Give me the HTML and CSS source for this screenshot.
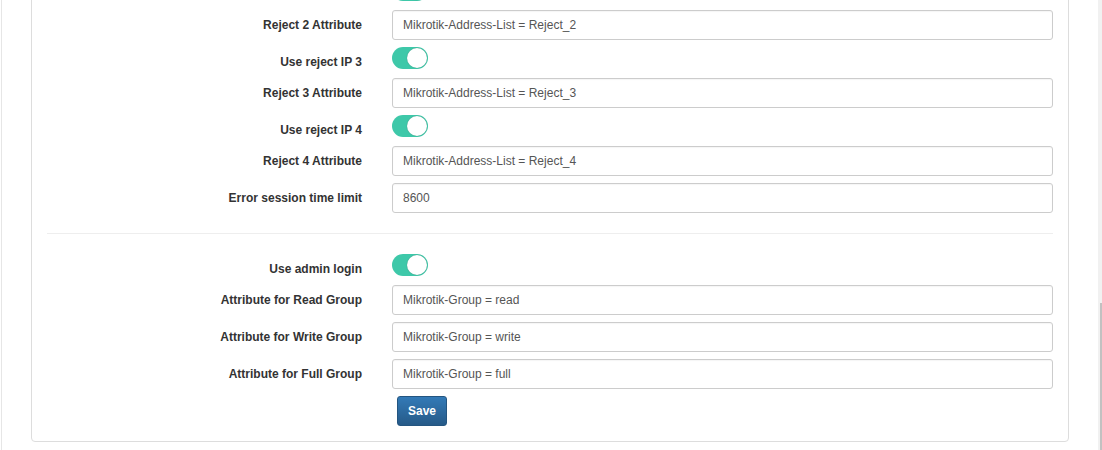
FILE: index.html
```html
<!DOCTYPE html>
<html>
<head>
<meta charset="utf-8">
<link rel="stylesheet" href="styles.css">
</head>
<body>
<div class="page">
  <div class="content">
    <div class="card">
      <form class="form">
        <div class="group toggle-row">
          <span class="label"></span>
          <div class="control"><span class="switch on"><span class="knob"></span></span></div>
        </div>
        <div class="group">
          <label class="label">Reject 2 Attribute</label>
          <div class="control"><input class="input" type="text" value="Mikrotik-Address-List = Reject_2"></div>
        </div>
        <div class="group toggle-row">
          <label class="label">Use reject IP 3</label>
          <div class="control"><span class="switch on"><span class="knob"></span></span></div>
        </div>
        <div class="group">
          <label class="label">Reject 3 Attribute</label>
          <div class="control"><input class="input" type="text" value="Mikrotik-Address-List = Reject_3"></div>
        </div>
        <div class="group toggle-row">
          <label class="label">Use reject IP 4</label>
          <div class="control"><span class="switch on"><span class="knob"></span></span></div>
        </div>
        <div class="group">
          <label class="label">Reject 4 Attribute</label>
          <div class="control"><input class="input" type="text" value="Mikrotik-Address-List = Reject_4"></div>
        </div>
        <div class="group">
          <label class="label">Error session time limit</label>
          <div class="control"><input class="input" type="text" value="8600"></div>
        </div>
        <hr class="divider">
        <div class="group toggle-row">
          <label class="label">Use admin login</label>
          <div class="control"><span class="switch on"><span class="knob"></span></span></div>
        </div>
        <div class="group">
          <label class="label">Attribute for Read Group</label>
          <div class="control"><input class="input" type="text" value="Mikrotik-Group = read"></div>
        </div>
        <div class="group">
          <label class="label">Attribute for Write Group</label>
          <div class="control"><input class="input" type="text" value="Mikrotik-Group = write"></div>
        </div>
        <div class="group">
          <label class="label">Attribute for Full Group</label>
          <div class="control"><input class="input" type="text" value="Mikrotik-Group = full"></div>
        </div>
        <div class="group actions">
          <span class="label"></span>
          <div class="control"><button class="btn" type="button">Save</button></div>
        </div>
      </form>
    </div>
  </div>
  <div class="scrollbar"><div class="thumb"></div></div>
</div>
</body>
</html>
```

FILE: styles.css
```css
html, body {
  margin: 0;
  padding: 0;
  background: #ffffff;
  height: 100%;
  overflow: hidden;
}

body {
  font-family: "Liberation Sans", Arial, sans-serif;
  font-size: 12px;
  color: #333333;
}

.page {
  display: flex;
  height: 450px;
}

.content {
  flex: 1;
  margin-left: 1px;
  border-left: 1px solid #e6e6e6;
  padding: 0 29px;
}

.card {
  margin-top: -22px;
  border: 1px solid #dddddd;
  border-radius: 4px;
  padding: 0 15px 15px;
  background: #ffffff;
}

.form {
  margin: 0;
}

.group {
  display: grid;
  grid-template-columns: 315px 1fr;
  column-gap: 30px;
  margin-bottom: 7px;
}

.label {
  text-align: right;
  font-weight: bold;
  font-size: 12px;
  line-height: 17px;
  padding-top: 7px;
  color: #333333;
}

.toggle-row .control {
  height: 24px;
}

.input {
  display: block;
  box-sizing: border-box;
  width: 100%;
  height: 30px;
  padding: 0 10px;
  border: 1px solid #cccccc;
  border-radius: 3px;
  font-family: "Liberation Sans", Arial, sans-serif;
  font-size: 12px;
  color: #555555;
  background: #ffffff;
  box-shadow: inset 0 1px 1px rgba(0, 0, 0, 0.04);
  outline: none;
}

.switch {
  display: block;
  position: relative;
  width: 36px;
  height: 22px;
  border-radius: 11px;
  background: #3ec8a9;
}

.knob {
  position: absolute;
  top: 1px;
  right: 1px;
  width: 20px;
  height: 20px;
  box-sizing: border-box;
  border-radius: 50%;
  background: #ffffff;
  box-shadow: 0 0 1px rgba(0, 0, 0, 0.35);
}

.divider {
  margin: 20px 0 20px;
  border: 0;
  border-top: 1px solid #eeeeee;
  height: 0;
}

.actions {
  margin-bottom: 0;
}

.actions .label {
  padding: 0;
}

.btn {
  display: block;
  margin-left: 5px;
  height: 30px;
  padding: 0 10px;
  border: 1px solid #245580;
  border-radius: 3px;
  background: linear-gradient(to bottom, #337ab7 0%, #265a88 100%);
  color: #ffffff;
  font-family: "Liberation Sans", Arial, sans-serif;
  font-size: 12px;
  font-weight: bold;
  cursor: pointer;
}

.scrollbar {
  width: 4px;
  background: #f1f1f1;
  padding-top: 303px;
  box-sizing: border-box;
  display: flex;
  justify-content: flex-end;
}

.thumb {
  width: 2px;
  background: #c1c1c1;
}
```
